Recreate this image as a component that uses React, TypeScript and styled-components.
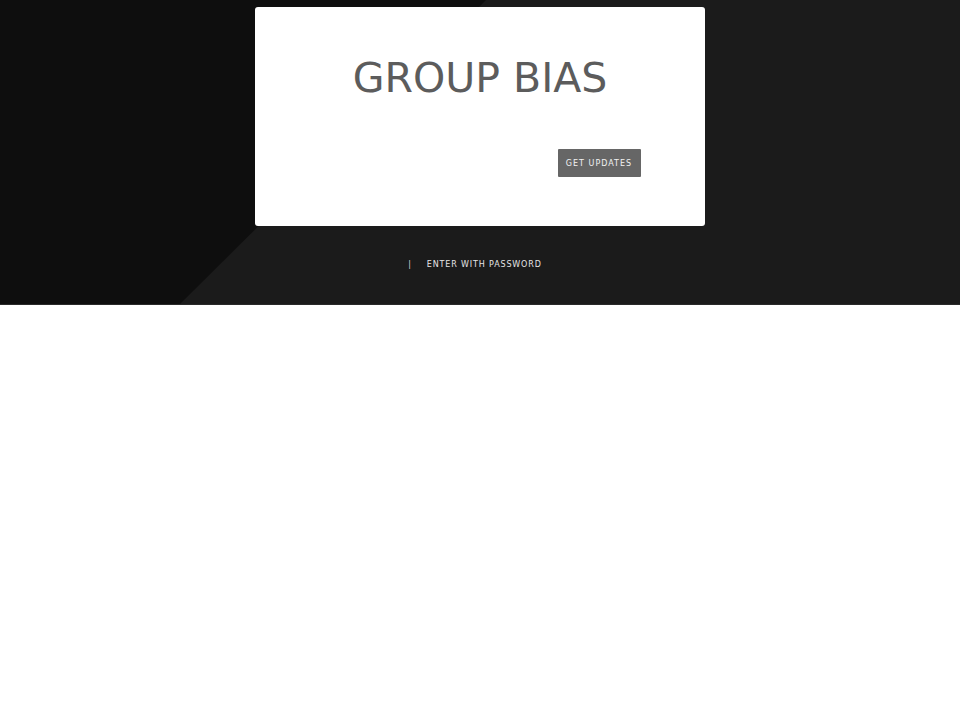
import React from 'react';
import styled, { createGlobalStyle } from 'styled-components';

const GlobalStyle = createGlobalStyle`
    html, body {
        margin: 0;
        padding: 0;
        background: #ffffff;
        font-family: "DejaVu Sans", "Liberation Sans", sans-serif;
    }
`;

export default function App() {
    return (
        <>
            <GlobalStyle />
            <Hero>
                <Card>
                    <Title>GROUP BIAS</Title>
                    <SignupForm onSubmit={(e) => e.preventDefault()}>
                        <EmailInput type="email" placeholder="" aria-label="Email" />
                        <SubmitButton type="submit">Get updates</SubmitButton>
                    </SignupForm>
                </Card>
                <PasswordRow>
                    <Divider>|</Divider>
                    <PasswordLink href="#password">Enter with password</PasswordLink>
                </PasswordRow>
            </Hero>
        </>
    );
}

const Hero = styled.section`
    position: relative;
    overflow: hidden;
    height: 305px;
    padding-top: 7px;
    box-sizing: border-box;
    background: #1b1b1b;
    border-bottom: 1px solid #2a2a2a;
    display: flex;
    flex-direction: column;
    align-items: center;

    &::before {
        content: '';
        position: absolute;
        inset: 0;
        background: #0e0e0e;
        clip-path: polygon(0 0, 486px 0, 179px 305px, 0 305px);
    }
`;

const Card = styled.div`
    position: relative;
    width: 450px;
    height: 219px;
    box-sizing: border-box;
    padding-top: 47px;
    background: #ffffff;
    border-radius: 3px;
    display: flex;
    flex-direction: column;
    align-items: center;
`;

const Title = styled.h1`
    margin: 0;
    font-family: "DejaVu Sans", sans-serif;
    font-weight: 400;
    font-size: 41px;
    line-height: 48px;
    color: #5c5c5c;
`;

const SignupForm = styled.form`
    display: flex;
    align-items: center;
    margin-top: 47px;
    margin-right: 5px;
    width: 326px;
`;

const EmailInput = styled.input`
    flex: 1;
    height: 28px;
    border: none;
    outline: none;
    background: transparent;
    padding: 0 10px;
    font-size: 12px;
`;

const SubmitButton = styled.button`
    height: 28px;
    width: 83px;
    border: none;
    border-radius: 1px;
    background: #666666;
    color: #f2f2f2;
    font-family: "DejaVu Sans", sans-serif;
    font-size: 8px;
    letter-spacing: 1px;
    text-transform: uppercase;
    padding: 0;
    cursor: pointer;
`;

const PasswordRow = styled.div`
    position: relative;
    display: flex;
    align-items: center;
    gap: 15px;
    margin-top: 34px;
    margin-right: 10px;
    font-family: "DejaVu Sans", sans-serif;
    font-size: 8px;
    letter-spacing: 0.85px;
`;

const Divider = styled.span`
    color: #d8d8d8;
`;

const PasswordLink = styled.a`
    color: #e6e6e6;
    text-decoration: none;
    text-transform: uppercase;
`;
